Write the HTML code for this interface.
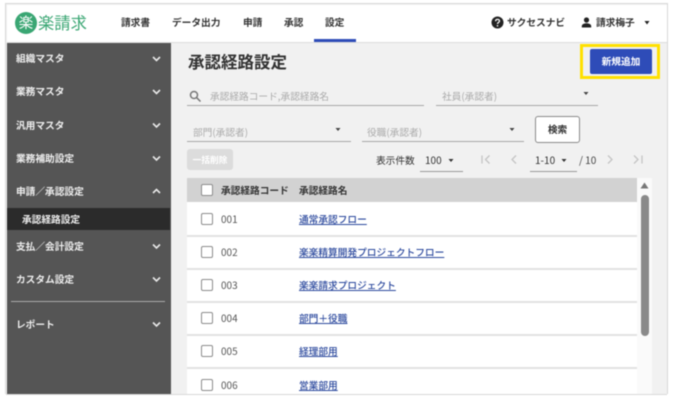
<!DOCTYPE html>
<html lang="ja"><head><meta charset="utf-8">
<style>
html,body{margin:0;padding:0;background:#fff}
body{width:674px;height:402px;overflow:hidden;position:relative;font-family:"Noto Sans CJK JP","Liberation Sans",sans-serif;color:#333}
#f{position:absolute;left:0;top:0;width:674px;height:402px;filter:blur(.45px)}
.a{position:absolute;white-space:nowrap}
.t{position:absolute;white-space:nowrap;line-height:16px;height:16px;margin-top:1px}
.n{font-size:9.7px;font-weight:700;color:#333}
.s{font-size:9.7px;font-weight:700;color:#eee;left:16px}
.ph{font-size:9.7px;color:#aaa}
.ln{position:absolute;height:1px;background:#a8a8a8}
.cb{position:absolute;left:201px;width:10px;height:10px;border:1.5px solid #8c8c8c;border-radius:2px;background:#fff}
.code{position:absolute;left:221px;font-size:10px;color:#555;line-height:16px;margin-top:1px}
.lk{position:absolute;left:299px;font-size:9.7px;font-weight:500;color:#2d4a9e;text-decoration:underline;line-height:16px;white-space:nowrap;margin-top:1px}
.rl{position:absolute;left:187px;width:450px;height:1.5px;background:#e2e2e2}
</style></head><body><div id="f">
<div class="a" style="left:6px;top:4px;width:661px;height:390px;background:#f1f1f1;outline:1px solid #d8d8d8"></div>
<div class="a" style="left:7px;top:5px;width:660px;height:37px;background:#fff;border-bottom:1px solid #ddd"></div>
<div class="a" style="left:15px;top:12px;width:22px;height:22px;border-radius:50%;background:#3aa673;color:#fff;font-size:14.5px;line-height:21px;text-align:center">楽</div>
<div class="a" style="left:38px;top:12px;font-size:16.3px;line-height:20px;height:20px;color:#3aa673">楽請求</div>
<div class="t n" style="left:121px;top:13px">請求書</div>
<div class="t n" style="left:172px;top:13px">データ出力</div>
<div class="t n" style="left:243px;top:13px">申請</div>
<div class="t n" style="left:284px;top:13px">承認</div>
<div class="t n" style="left:325px;top:13px">設定</div>
<div class="a" style="left:314px;top:39px;width:42px;height:2.5px;background:#2e4cb8"></div>
<svg class="a" style="left:491px;top:16px" width="13" height="13" viewBox="0 0 13 13"><circle cx="6.5" cy="6.5" r="6" fill="#222"/><path d="M4.6 5.2c0-2.4 3.9-2.4 3.9-.2 0 1.400-2 1.400-2 3" fill="none" stroke="#fff" stroke-width="1.300"/><circle cx="6.500" cy="9.800" r=".8" fill="#fff"/></svg>
<div class="t n" style="left:507px;top:13px">サクセスナビ</div>
<svg class="a" style="left:581px;top:17px" width="11" height="11" viewBox="0 0 11 11"><circle cx="5.500" cy="3" r="2.600" fill="#222"/><path d="M.8 10.500V9c0-1.800 3-2.700 4.700-2.700S10.200 7.200 10.200 9v1.500z" fill="#222"/></svg>
<div class="t n" style="left:596px;top:13px">請求梅子</div>
<svg class="a" style="left:644px;top:21px" width="7" height="4"><path d="M.5 0h5L3 3.500z" fill="#222"/></svg>

<div class="a" style="left:7px;top:43px;width:164px;height:351px;background:#555"></div>
<div class="t s" style="top:49px">組織マスタ</div>
<div class="t s" style="top:82px">業務マスタ</div>
<div class="t s" style="top:116px">汎用マスタ</div>
<div class="t s" style="top:149px">業務補助設定</div>
<div class="t s" style="top:182px">申請／承認設定</div>
<div class="a" style="left:7px;top:208px;width:163px;height:22px;background:#2b2b2b"></div>
<div class="t s" style="left:22px;top:210px">承認経路設定</div>
<div class="t s" style="top:237px">支払／会計設定</div>
<div class="t s" style="top:270px">カスタム設定</div>
<div class="a" style="left:11px;top:301px;width:154px;height:1px;background:#aaa"></div>
<div class="t s" style="top:315px">レポート</div>
<svg class="a" style="left:151px;top:55px" width="11" height="280" viewBox="0 0 11 280" fill="none" stroke="#e8e8e8" stroke-width="1.600">
<path d="M2 2l3.500 3.500L9 2"/><path d="M2 35l3.500 3.500L9 35"/><path d="M2 68.500l3.500 3.500L9 68.500"/><path d="M2 101.500l3.500 3.500L9 101.500"/><path d="M2 138l3.500-3.500L9 138"/><path d="M2 189.500l3.500 3.500L9 189.500"/><path d="M2 222.500l3.500 3.500L9 222.500"/><path d="M2 267.500l3.500 3.500L9 267.500"/></svg>

<div class="a" style="left:188px;top:49px;font-size:16.5px;font-weight:700;color:#333;line-height:24px;height:24px">承認経路設定</div>
<div class="a" style="left:580px;top:44px;width:74px;height:29px;border:3px solid #ffe000"></div>
<div class="a" style="left:590px;top:49px;width:62px;height:25px;background:#2e4cb8;border-radius:2px;color:#fff;font-size:9.7px;font-weight:700;text-align:center;line-height:25px">新規追加</div>

<svg class="a" style="left:189px;top:90px" width="13" height="13" viewBox="0 0 13 13" fill="none" stroke="#777" stroke-width="1.500"><circle cx="5" cy="5" r="3.500"/><path d="M7.700 7.700L11.500 11.500"/></svg>
<div class="t ph" style="left:210px;top:87px">承認経路コード,承認経路名</div>
<div class="ln" style="left:187px;top:105px;width:237px"></div>
<div class="t ph" style="left:442px;top:87px">社員(承認者)</div>
<div class="ln" style="left:436px;top:105px;width:162px"></div>
<svg class="a" style="left:583px;top:92px" width="6" height="4"><path d="M.5 0h5L3 3z" fill="#444"/></svg>
<div class="t ph" style="left:193px;top:123px">部門(承認者)</div>
<div class="ln" style="left:187px;top:141px;width:164px"></div>
<svg class="a" style="left:335px;top:128px" width="6" height="4"><path d="M.5 0h5L3 3z" fill="#444"/></svg>
<div class="t ph" style="left:367px;top:123px">役職(承認者)</div>
<div class="ln" style="left:362px;top:141px;width:162px"></div>
<svg class="a" style="left:509px;top:128px" width="6" height="4"><path d="M.5 0h5L3 3z" fill="#444"/></svg>
<div class="a" style="left:535px;top:116px;width:43px;height:25px;background:#fff;border:1px solid #8a8a8a;border-radius:3px;font-size:9.7px;font-weight:700;text-align:center;line-height:25px;color:#333">検索</div>

<div class="a" style="left:187px;top:149px;width:46px;height:21px;background:#dcdcdc;border-radius:3px;color:#fff;font-size:8.7px;font-weight:700;text-align:center;line-height:21px">一括削除</div>
<div class="t" style="left:376px;top:151px;font-size:9.7px;color:#333">表示件数</div>
<div class="t" style="left:425px;top:151px;font-size:10px;color:#333">100</div>
<svg class="a" style="left:448px;top:159px" width="6" height="4"><path d="M.5 0h5L3 3z" fill="#333"/></svg>
<div class="ln" style="left:420px;top:171px;width:43px;background:#999"></div>
<svg class="a" style="left:480px;top:154px" width="170" height="12" viewBox="0 0 170 12" fill="none" stroke="#c4c4c4" stroke-width="1.300">
<path d="M2 1.500v8M9.500 1.500L5.500 5.500l4 4"/><path d="M36 1.500L32 5.500l4 4"/><path d="M128 1.500l4 4-4 4"/><path d="M154 1.500l4 4-4 4M162 1.500v8"/></svg>
<div class="t" style="left:535px;top:151px;font-size:10px;color:#333">1-10</div>
<svg class="a" style="left:561px;top:159px" width="6" height="4"><path d="M.5 0h5L3 3z" fill="#333"/></svg>
<div class="ln" style="left:530px;top:171px;width:47px;background:#999"></div>
<div class="t" style="left:579px;top:151px;font-size:10px;color:#444">/ 10</div>

<div class="a" style="left:187px;top:178px;width:450px;height:216px;background:#fff"></div>
<div class="a" style="left:187px;top:178px;width:450px;height:24px;background:#d2d2d2"></div>
<div class="a" style="left:637px;top:178px;width:15px;height:216px;background:#fafafa"></div>
<svg class="a" style="left:640px;top:182px" width="9" height="7"><path d="M.5 6.500L4.500 .5l4 6z" fill="#777"/></svg>
<div class="a" style="left:641px;top:195px;width:8px;height:141px;background:#8a8a8a;border-radius:4px"></div>
<div class="cb" style="top:184px"></div>
<div class="t" style="left:221px;top:181px;font-size:9.7px;font-weight:700;color:#333">承認経路コード</div>
<div class="t" style="left:299px;top:181px;font-size:9.7px;font-weight:700;color:#333">承認経路名</div>

<div class="rl" style="top:235px"></div><div class="rl" style="top:268px"></div><div class="rl" style="top:301px"></div><div class="rl" style="top:334px"></div><div class="rl" style="top:367px"></div>

<div class="cb" style="top:213px"></div><div class="code" style="top:210px">001</div><div class="lk" style="top:210px">通常承認フロー</div>
<div class="cb" style="top:246px"></div><div class="code" style="top:243px">002</div><div class="lk" style="top:243px">楽楽精算開発プロジェクトフロー</div>
<div class="cb" style="top:279px"></div><div class="code" style="top:276px">003</div><div class="lk" style="top:276px">楽楽請求プロジェクト</div>
<div class="cb" style="top:312px"></div><div class="code" style="top:309px">004</div><div class="lk" style="top:309px">部門＋役職</div>
<div class="cb" style="top:345px"></div><div class="code" style="top:342px">005</div><div class="lk" style="top:342px">経理部用</div>
<div class="cb" style="top:379px"></div><div class="code" style="top:376px">006</div><div class="lk" style="top:376px">営業部用</div>
<div class="a" style="left:0;top:394px;width:674px;height:8px;background:#fff"></div>
<div class="a" style="left:6px;top:394px;width:661px;height:1px;background:#d8d8d8"></div>
</div></body></html>
